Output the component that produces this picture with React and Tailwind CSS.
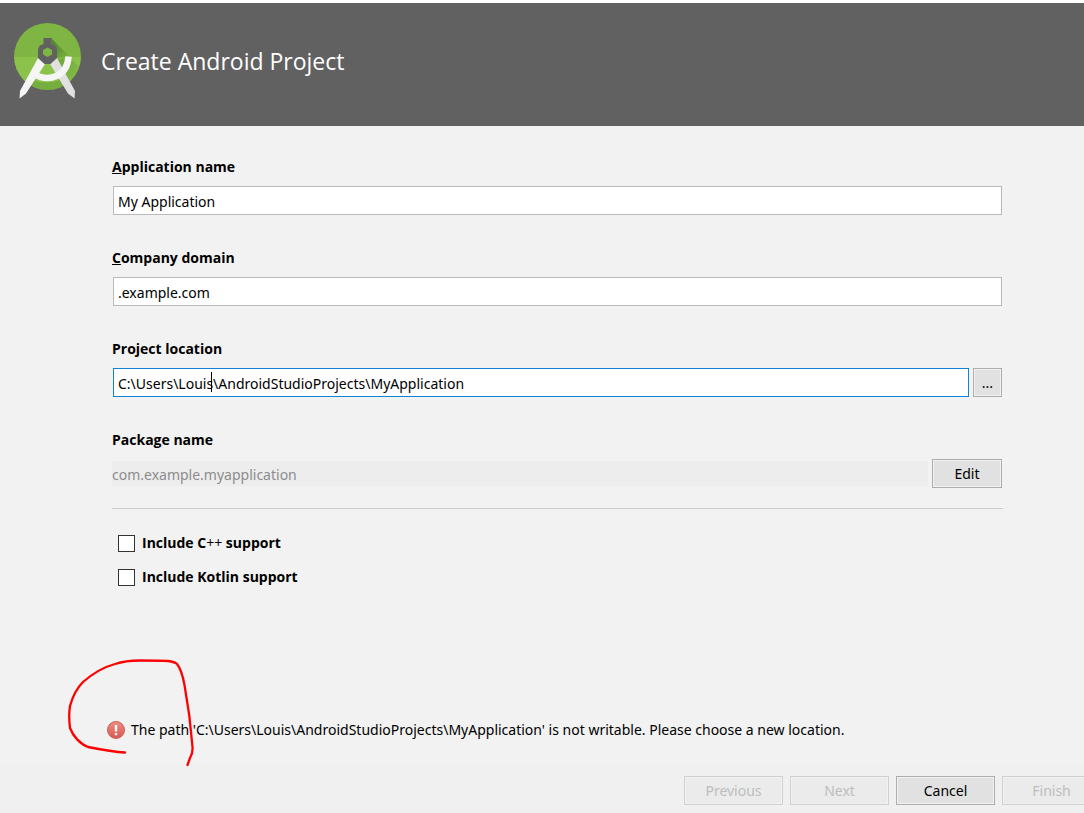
// src/App.jsx
import React, { useState } from 'react';

const AndroidStudioLogo = () => (
  <svg width="68" height="76" viewBox="0 0 68 76" className="shrink-0" aria-hidden="true">
    <defs>
      <clipPath id="disc">
        <circle cx="34.500" cy="33.500" r="33.500" />
      </clipPath>
      <linearGradient id="shadow" x1="0" y1="0" x2="1" y2="1">
        <stop offset="0" stopColor="#33691e" stopOpacity="0.7" />
        <stop offset="1" stopColor="#33691e" stopOpacity="0" />
      </linearGradient>
    </defs>
    <g clipPath="url(#disc)">
      <rect width="68" height="34" fill="#7fb542" />
      <rect y="34" width="68" height="34" fill="#8bc34a" />
      <path d="M38 15 L57 34 L42 36 Z" fill="url(#shadow)" />
      <path d="M41 37 L56 34 L68 46 L68 68 L50 68 Z" fill="url(#shadow)" opacity="0.5" />
      <path d="M20 57 Q34 62 47 57 L50 64 Q34 70 16 65 Z" fill="#558b2f" opacity="0.4" />
    </g>
    <path d="M37 41 L44 35 L62 68 L61.500 75.500 L55 70.500 Z" fill="#e0e0e0" />
    <path d="M32 41 L25 35 L7 68 L6.500 75.500 L13 70.500 Z" fill="#f5f5f5" />
    <path d="M20 50.500 C36 60.500 54.500 53 55.500 33.500" fill="none" stroke="#f5f5f5" strokeWidth="6.500" />
    <path
      fillRule="evenodd"
      d="M30.500 15 H38.500 V21 L42 22.500 Q44 24 44 27 V35 L37.500 41 H31.500 L25 35 V27 Q25 24 27 22.500 L30.500 21 Z M34.500 24.500 L30 27 V31.500 L34.500 34 L39 31.500 V27 Z"
      fill="#616161"
    />
  </svg>
);

const ErrorIcon = () => (
  <svg width="18" height="18" viewBox="0 0 18 18" className="shrink-0" aria-hidden="true">
    <defs>
      <linearGradient id="error" x1="0" y1="0" x2="0" y2="1">
        <stop offset="0" stopColor="#ee8d83" />
        <stop offset="1" stopColor="#d9574c" />
      </linearGradient>
    </defs>
    <circle cx="9" cy="9" r="8.500" fill="url(#error)" stroke="#c9645b" strokeWidth="1" />
    <path d="M7.800 4 H10.200 V10.500 H7.800 Z M7.800 12 H10.200 V14.200 H7.800 Z" fill="#fff" />
  </svg>
);

// Freehand red loop around the error icon
const Scribble = () => (
  <svg
    width="150"
    height="125"
    viewBox="0 0 150 125"
    className="pointer-events-none absolute -left-[47px] -top-[70px]"
    aria-hidden="true"
  >
    <path
      d="M65 102.500 C55 102 38 99 28 97 C20 94 13 86 10 78 C9 70 9 62 10 56 C13 45 17 38 23 32 C31 25 44 17 55 14 C64 11 74 10.500 80 10.500 C90 10.500 101 10.500 108 11 Q115 12 117 14 C121 19 123 27 124.500 35 C128 54 131 77 132.500 97 Q133 103 130 108 L127.500 115"
      fill="none"
      stroke="#ff0000"
      strokeWidth="2.300"
      strokeLinecap="round"
      strokeLinejoin="round"
    />
  </svg>
);

const Button = ({ className = '', disabled, children }) => (
  <button
    type="button"
    disabled={disabled}
    className={`h-[29px] shrink-0 border text-center text-sm ${
      disabled
        ? 'border-[#d0d0d0] bg-[#ebebeb] text-[#bdbdbd] inset-ring inset-ring-[#f2f2f2]'
        : 'border-[#adadad] bg-[#e1e1e1] text-black inset-ring inset-ring-[#f2f2f2]'
    } ${className}`}
  >
    {children}
  </button>
);

const inputClass = 'h-[29px] w-full border bg-white px-1 pt-0.5 text-sm text-black outline-none';

const labelClass = "self-start font-['Open_Sans',sans-serif] text-sm font-bold leading-5";

const Field = ({ id, label, children }) => (
  <div className="flex flex-col gap-[9px]">
    <label htmlFor={id} className={labelClass}>{label}</label>
    <div className="mx-px flex gap-1">{children}</div>
  </div>
);

const Option = ({ label, checked, onChange }) => (
  <label className={`flex items-center gap-[7px] ${labelClass}`}>
    <input
      type="checkbox"
      checked={checked}
      onChange={(e) => onChange(e.target.checked)}
      className="size-[17px] appearance-none border border-[#333333] bg-white checked:bg-[#333333]"
    />
    <span>{label}</span>
  </label>
);

const App = () => {
  const [form, setForm] = useState({
    name: 'My Application',
    domain: '.example.com',
    location: 'C:\\Users\\Louis\\AndroidStudioProjects\\MyApplication',
    cpp: false,
    kotlin: false
  });

  const handleChange = (key, value) => {
    setForm(prev => ({ ...prev, [key]: value }));
  };

  return (
    <div className="flex min-h-screen flex-col overflow-hidden bg-[#f2f2f2] font-['Noto_Sans',sans-serif] text-black">
      {/* Header */}
      <header className="flex h-[126px] items-center gap-5 border-t-3 border-white bg-[#616161] px-[13px] pb-2">
        <AndroidStudioLogo />
        <h1 className="pt-0.5 font-['Open_Sans',sans-serif] text-[23px] text-white">Create Android Project</h1>
      </header>

      {/* Form */}
      <main className="flex flex-1 flex-col pb-6 pl-28 pr-[81px] pt-[31px]">
        <div className="flex flex-col gap-[33px]">
          <Field id="name" label={<><u>A</u>pplication name</>}>
            <input
              id="name"
              type="text"
              value={form.name}
              onChange={(e) => handleChange('name', e.target.value)}
              className={`${inputClass} border-[#bababa]`}
            />
          </Field>

          <Field id="domain" label={<><u>C</u>ompany domain</>}>
            <input
              id="domain"
              type="text"
              value={form.domain}
              onChange={(e) => handleChange('domain', e.target.value)}
              className={`${inputClass} border-[#bababa]`}
            />
          </Field>

          <Field id="location" label="Project location">
            <div className="relative flex-1">
              <input
                id="location"
                type="text"
                value={form.location}
                onChange={(e) => handleChange('location', e.target.value)}
                className={`${inputClass} border-[#0f83d8] caret-transparent`}
              />
              <span className="absolute left-[98px] top-1 h-5 w-px bg-black" />
            </div>
            <Button className="w-[29px]">...</Button>
          </Field>

          <Field id="package" label="Package name">
            <input
              id="package"
              type="text"
              readOnly
              value="com.example.myapplication"
              className="-ml-px mt-0.5 h-[25px] min-w-0 flex-1 bg-[#ededed] pt-0.5 text-sm text-[#8c8c8c] outline-none"
            />
            <Button className="w-[70px]">Edit</Button>
          </Field>
        </div>

        <hr className="mt-5 border-[#cccccc]" />

        <div className="mt-6 flex flex-col gap-3.5 pl-1.5">
          <Option
            label={<>Include C<span className="font-normal">++</span> support</>}
            checked={form.cpp}
            onChange={(v) => handleChange('cpp', v)}
          />
          <Option label="Include Kotlin support" checked={form.kotlin} onChange={(v) => handleChange('kotlin', v)} />
        </div>

        {/* Validation message */}
        <div className="relative -ml-[5px] mt-auto flex items-center gap-1.5">
          <ErrorIcon />
          <p className="text-sm">
            The path 'C:\Users\Louis\AndroidStudioProjects\MyApplication' is not writable. Please choose a new location.
          </p>
          <Scribble />
        </div>
      </main>

      {/* Footer */}
      <footer className="-mr-[17px] flex justify-end gap-[7px] bg-[#f0f0f0] pb-2 pt-3">
        <Button disabled className="w-[99px]">Previous</Button>
        <Button disabled className="w-[99px]">Next</Button>
        <Button className="w-[99px]">Cancel</Button>
        <Button disabled className="w-[99px]">Finish</Button>
      </footer>
    </div>
  );
};

export default App;
